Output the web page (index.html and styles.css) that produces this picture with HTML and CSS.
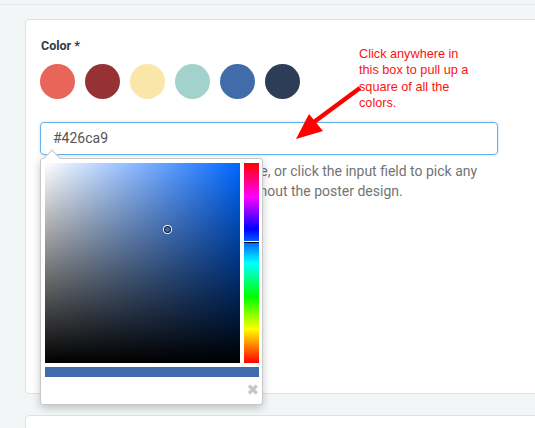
FILE: index.html
```html
<!DOCTYPE html>
<html>
<head>
<meta charset="utf-8">
<link rel="stylesheet" href="styles.css">
</head>
<body>
<div class="topbar"></div>
<div class="card">
  <div class="label">Color *</div>
  <div class="swatches">
    <span class="sw" style="background:#e8655a"></span>
    <span class="sw" style="background:#963235"></span>
    <span class="sw" style="background:#fbe6a9"></span>
    <span class="sw" style="background:#a3d2cd"></span>
    <span class="sw" style="background:#426ca9"></span>
    <span class="sw" style="background:#2d3c57"></span>
  </div>
  <div class="field">
    <div class="input">#426ca9</div>
    <p class="help">Select one of the brand colors above, or click the input field to pick any other colours. It will be used throughout the poster design.</p>
    <div class="picker">
      <div class="pointer"></div>
      <div class="pick-row">
        <div class="sat"><span class="sat-dot"></span></div>
        <div class="hue"><span class="hue-mark"></span></div>
      </div>
      <div class="preview"></div>
      <div class="close">✖</div>
    </div>
  </div>
</div>
<div class="card card2"></div>
<div class="note">Click anywhere in<br>this box to pull up a<br>square of all the<br>colors.</div>
<svg class="arrow" width="80" height="70" viewBox="0 0 80 70">
  <line x1="71" y1="8" x2="25" y2="42" stroke="#ff0000" stroke-width="4.5"/>
  <polygon points="7,59 20,34 34,51" fill="#ff0000"/>
</svg>
</body>
</html>
```
FILE: styles.css
```css
html, body { margin: 0; padding: 0; }
body {
  background: #f2f6f7;
  font-family: Roboto, "Liberation Sans", sans-serif;
  width: 535px;
  height: 428px;
  overflow: hidden;
  position: relative;
}
.topbar {
  height: 4px;
  border-bottom: 1px solid #e4e9eb;
}
.card {
  margin: 14px 0 0 25px;
  width: 560px;
  height: 375px;
  box-sizing: border-box;
  background: #fff;
  border: 1px solid #dde2e5;
  border-radius: 4px;
  padding: 18px 15px 0;
}
.card2 { margin-top: 21px; height: 60px; }
.label {
  font-size: 12.5px;
  font-weight: 700;
  color: #2f3a4b;
  line-height: 16px;
}
.swatches {
  display: flex;
  gap: 10px;
  margin-top: 10px;
  margin-left: -1px;
}
.sw {
  width: 35px;
  height: 35px;
  border-radius: 50%;
  display: block;
}
.field { position: relative; margin-top: 23px; }
.input {
  width: 458px;
  height: 33px;
  box-sizing: border-box;
  border: 1px solid #66afe9;
  border-radius: 4px;
  box-shadow: 0 0 3px rgba(102,175,233,.45);
  padding: 0 12px;
  font-size: 14px;
  line-height: 31px;
  color: #555;
  margin-left: -1px;
}
.help {
  margin: 6px 0 0;
  width: 445px;
  font-size: 14px;
  line-height: 20px;
  color: #737373;
}
.picker {
  position: absolute;
  left: -1px;
  top: 36px;
  width: 223px;
  height: 247px;
  box-sizing: border-box;
  background: #fff;
  border: 1px solid #c8c8c8;
  border-radius: 3px;
  box-shadow: 0 3px 8px rgba(0,0,0,.22);
  padding: 4px 3px 0 4px;
}
.pointer {
  position: absolute;
  left: 5px;
  top: -7px;
  width: 11px;
  height: 11px;
  background: #fff;
  border-left: 1px solid #c8c8c8;
  border-top: 1px solid #c8c8c8;
  transform: rotate(45deg);
}
.pick-row { display: flex; gap: 4px; position: relative; }
.sat {
  position: relative;
  width: 195px;
  height: 200px;
  background:
    linear-gradient(to bottom, rgba(0,0,0,0), #000),
    linear-gradient(to right, #fff, rgba(255,255,255,0)),
    #0066ff;
}
.sat-dot {
  position: absolute;
  left: 119px;
  top: 63px;
  width: 5px;
  height: 5px;
  border-radius: 50%;
  border: 1px solid #111;
  box-shadow: 0 0 0 1px #fff;
}
.hue {
  position: relative;
  width: 15px;
  height: 200px;
  background: linear-gradient(to bottom, #f00 0%, #f0f 17%, #00f 33%, #0ff 50%, #0f0 67%, #ff0 83%, #f00 100%);
}
.hue-mark {
  position: absolute;
  left: 0;
  right: 0;
  top: 78px;
  height: 1px;
  background: #000;
  border-top: 1px solid #fff;
}
.preview {
  margin-top: 4px;
  width: 214px;
  height: 10px;
  background: #426ca9;
}
.close {
  text-align: right;
  color: #c6c6c6;
  font-family: "DejaVu Sans", sans-serif;
  font-size: 15px;
  line-height: 16px;
  margin-top: 5px;
  padding-right: 0;
}
.note {
  position: absolute;
  left: 359px;
  top: 46px;
  font-family: "Liberation Sans", Arial, sans-serif;
  font-size: 12.7px;
  line-height: 16.3px;
  color: #ff1010;
}
.arrow {
  position: absolute;
  left: 289px;
  top: 80px;
}
```
